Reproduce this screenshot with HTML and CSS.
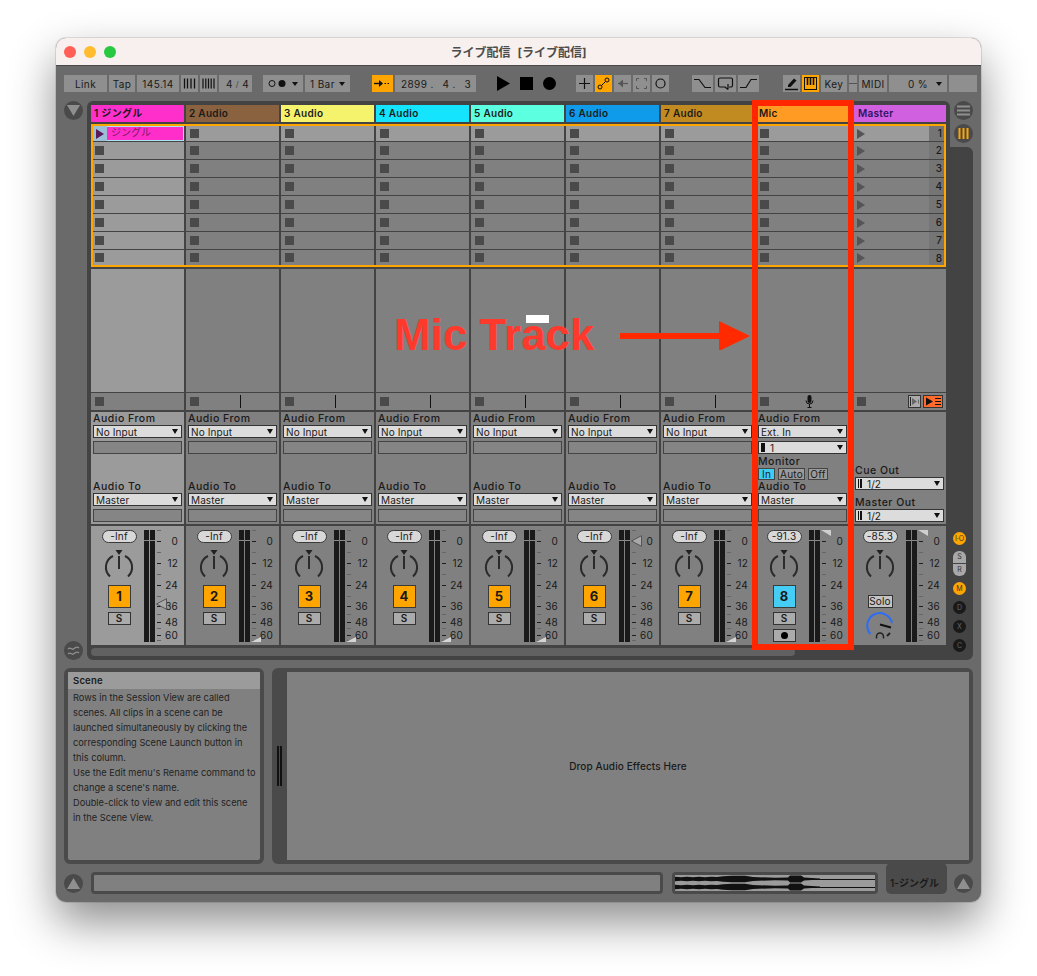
FILE: index.html
```html
<!DOCTYPE html>
<html lang="ja">
<head>
    <meta charset="UTF-8">
    <title>ライブ配信 [ライブ配信]</title>
    <link rel="stylesheet" href="styles.css">
</head>
<body>
    <svg class="defs">
        <symbol id="knob" viewBox="0 0 30 36">
            <path d="M11.5 4h7L15 9z" fill="#222"/>
            <path d="M15 10v13" stroke="#2b2b2b" stroke-width="2"/>
            <path d="M9 10A12.5 12.5 0 0 0 6 30.500M21 10A12.5 12.5 0 0 1 24 30.500" fill="none" stroke="#2b2b2b" stroke-width="2"/>
        </symbol>
        <symbol id="ticks" viewBox="0 0 7 112">
            <path d="M2 11.5h4M2 33.5h4M2 55.5h4M2 76.5h4M2 92.5h4M2 105.5h4" stroke="#1e1e1e"/>
            <path d="M2 .5h4M2 22.5h4M2 44.5h4M2 66.5h4M2 84.5h4M2 98.5h4M2 110.5h4" stroke="#666"/>
        </symbol>
        <symbol id="fader-left" viewBox="0 0 11 12">
            <path d="M.5 6L10.5.7v10.6z" fill="#a9a9a9" stroke="#555"/>
        </symbol>
        <symbol id="fader-low" viewBox="0 0 10 5">
            <path d="M0 5L10 0v5z" fill="#d4d4d4"/>
        </symbol>
        <symbol id="fader-top" viewBox="0 0 10 6">
            <path d="M0 0h10v6z" fill="#cfcfcf"/>
        </symbol>
        <symbol id="bars4" viewBox="0 0 17 17">
            <path d="M3.5 3.500v10M6.500 3.500v10M10 3.500v10M13.500 3.500v10" stroke="#111" stroke-width="1.300"/>
        </symbol>
        <symbol id="bars5" viewBox="0 0 17 17">
            <path d="M3 3.500v10M5.800 3.500v10M8.500 3.500v10M11.200 3.500v10M14 3.500v10" stroke="#111" stroke-width="1.200"/>
        </symbol>
        <path id="wave" d="M0 1.800L6 2.200 12 1.800 18 2.200 24 1.800 30 2.200 36 1.800 42 2 48 1.300 57 .8 70 .8 78 2 100 2.800 113 2.500 115 .5 126 .5 129 2.400 145 3.600V4.400L129 5.600 126 7.500H115L113 5.500 100 5.200 78 6 70 7.200H57L48 6.700 42 6 36 6.200 30 5.800 24 6.200 18 5.800 12 6.200 6 5.800 0 6.200z" fill="#111"/>
    </svg>

    <div class="window">
        <header class="titlebar">
            <div class="lights"><i class="red"></i><i class="yellow"></i><i class="green"></i></div>
            <h1>ライブ配信 [ライブ配信]</h1>
        </header>

        <!-- transport -->
        <div class="toolbar">
            <div class="group">
                <div class="btn w43">Link</div>
                <div class="btn w26">Tap</div>
                <div class="btn w42">145.14</div>
                <div class="btn w17"><svg width="17" height="17"><use href="#bars4"/></svg></div>
                <div class="btn w17"><svg width="17" height="17"><use href="#bars5"/></svg></div>
                <div class="btn w33 sig">4 <small>/</small> 4</div>
            </div>
            <div class="group gap11">
                <div class="btn w40 caret">
                    <svg width="19" height="9"><circle cx="4" cy="4.5" r="3" fill="none" stroke="#111"/><circle cx="14" cy="4.5" r="3.5" fill="#111"/></svg>
                </div>
                <div class="btn w45 caret">1 Bar</div>
            </div>
            <div class="group gap22">
                <div class="btn w21 on">
                    <svg width="17" height="9"><path d="M0 4.5h8" stroke="#111" stroke-width="1.4"/><path d="M5 1l4 3.5L5 8z" fill="#111"/><path d="M10.5 4.5h1.5M13.5 4.5h1.5" stroke="#111"/></svg>
                </div>
                <div class="btn w81 pos"><span>2899 .</span><span>4 .</span><span>3</span></div>
            </div>
            <div class="group gap21 transport">
                <svg width="13" height="17"><path d="M0 1l13 7.5L0 16z" fill="#000"/></svg>
                <svg width="13" height="17"><rect y="2" width="13" height="13" fill="#000"/></svg>
                <svg width="13" height="17"><circle cx="6.5" cy="8.5" r="6.5" fill="#000"/></svg>
            </div>
            <div class="group gap20">
                <div class="btn w17"><svg width="13" height="13"><path d="M6.5 1v11M1 6.5h11" stroke="#111" stroke-width="1.2"/></svg></div>
                <div class="btn w17 on"><svg width="13" height="13"><circle cx="3" cy="10" r="2" fill="none" stroke="#111"/><circle cx="10" cy="3" r="2" fill="none" stroke="#111"/><path d="M4.5 8.5l4-4" stroke="#111"/></svg></div>
                <div class="btn w17"><svg width="13" height="13"><path d="M2 6.5h10" stroke="#555" stroke-width="1.2"/><path d="M7 2.5L2.5 6.500 7 10.500z" fill="#555"/></svg></div>
                <div class="btn w17"><svg width="13" height="13"><path d="M1.500 4V1.500H4M9 1.500h2.500V4M1.500 9v2.500H4M9 11.500h2.500V9" fill="none" stroke="#555"/></svg></div>
                <div class="btn w17"><svg width="13" height="13"><circle cx="6.500" cy="6.500" r="4.500" fill="none" stroke="#111" stroke-width="1.200"/></svg></div>
            </div>
            <div class="group gap23">
                <div class="btn w21"><svg width="17" height="13"><path d="M0 2.500h5l6 8h6" fill="none" stroke="#111" stroke-width="1.200"/></svg></div>
                <div class="btn w21"><svg width="17" height="15"><path d="M8 11H3a1.500 1.500 0 0 1-1.500-1.500v-6A1.500 1.500 0 0 1 3 2h11a1.500 1.500 0 0 1 1.500 1.500v6A1.500 1.500 0 0 1 14 11h-2" fill="none" stroke="#111" stroke-width="1.200"/><path d="M11 8v5.500M11 13.500L8 11" stroke="#111" stroke-width="1.200"/></svg></div>
                <div class="btn w21"><svg width="17" height="13"><path d="M0 10.500h6l5-8h6" fill="none" stroke="#111" stroke-width="1.200"/></svg></div>
            </div>
            <div class="group gap24">
                <div class="btn w17"><svg width="15" height="15"><path d="M4 9l6-6.500 2.500 2L6.500 11H4z" fill="#111"/><path d="M1 13.500h13" stroke="#111" stroke-width="1.500"/></svg></div>
                <div class="btn w17 on"><svg width="13" height="13"><rect x=".5" y=".5" width="12" height="12" fill="none" stroke="#111"/><path d="M3.500 1v7M6.500 1v7M9.500 1v7" stroke="#111" stroke-width="1.600"/></svg></div>
                <div class="btn w26">Key</div>
                <div class="btn w8 split"></div>
                <div class="btn w28">MIDI</div>
                <div class="btn w58 caret centered">0 %</div>
                <div class="btn w28"></div>
            </div>
        </div>

        <div class="main">
            <div class="rail">
                <div class="round"><svg width="13" height="11"><path d="M0 0h13L6.500 11z" fill="#8f8f8f"/></svg></div>
                <div class="round"><svg width="13" height="11"><path d="M1 4c2.500-3 4 1.500 5.500 0S10 1 12 3M1 9c2.500-3 4 1.500 5.500 0S10 6 12 8" fill="none" stroke="#8f8f8f" stroke-width="1.300"/></svg></div>
            </div>

            <div class="session">
                <div class="tracks heads">
                    <div class="head c1">1 ジングル</div>
                    <div class="head c2">2 Audio</div>
                    <div class="head c3">3 Audio</div>
                    <div class="head c4">4 Audio</div>
                    <div class="head c5">5 Audio</div>
                    <div class="head c6">6 Audio</div>
                    <div class="head c7">7 Audio</div>
                    <div class="head c8">Mic</div>
                    <div class="head c9">Master</div>
                </div>

                <!-- clip slots, row by row -->
                <div class="clips">
                    <div class="slot clip"><b class="launch"></b><span>ジングル</span></div>
                    <div class="slot"><i></i></div><div class="slot"><i></i></div><div class="slot"><i></i></div><div class="slot"><i></i></div><div class="slot"><i></i></div><div class="slot"><i></i></div><div class="slot"><i></i></div>
                    <div class="slot"><b class="launch"></b><span class="num">1</span></div>

                    <div class="slot"><i></i></div><div class="slot"><i></i></div><div class="slot"><i></i></div><div class="slot"><i></i></div><div class="slot"><i></i></div><div class="slot"><i></i></div><div class="slot"><i></i></div><div class="slot"><i></i></div>
                    <div class="slot"><b class="launch"></b><span class="num">2</span></div>

                    <div class="slot"><i></i></div><div class="slot"><i></i></div><div class="slot"><i></i></div><div class="slot"><i></i></div><div class="slot"><i></i></div><div class="slot"><i></i></div><div class="slot"><i></i></div><div class="slot"><i></i></div>
                    <div class="slot"><b class="launch"></b><span class="num">3</span></div>

                    <div class="slot"><i></i></div><div class="slot"><i></i></div><div class="slot"><i></i></div><div class="slot"><i></i></div><div class="slot"><i></i></div><div class="slot"><i></i></div><div class="slot"><i></i></div><div class="slot"><i></i></div>
                    <div class="slot"><b class="launch"></b><span class="num">4</span></div>

                    <div class="slot"><i></i></div><div class="slot"><i></i></div><div class="slot"><i></i></div><div class="slot"><i></i></div><div class="slot"><i></i></div><div class="slot"><i></i></div><div class="slot"><i></i></div><div class="slot"><i></i></div>
                    <div class="slot"><b class="launch"></b><span class="num">5</span></div>

                    <div class="slot"><i></i></div><div class="slot"><i></i></div><div class="slot"><i></i></div><div class="slot"><i></i></div><div class="slot"><i></i></div><div class="slot"><i></i></div><div class="slot"><i></i></div><div class="slot"><i></i></div>
                    <div class="slot"><b class="launch"></b><span class="num">6</span></div>

                    <div class="slot"><i></i></div><div class="slot"><i></i></div><div class="slot"><i></i></div><div class="slot"><i></i></div><div class="slot"><i></i></div><div class="slot"><i></i></div><div class="slot"><i></i></div><div class="slot"><i></i></div>
                    <div class="slot"><b class="launch"></b><span class="num">7</span></div>

                    <div class="slot"><i></i></div><div class="slot"><i></i></div><div class="slot"><i></i></div><div class="slot"><i></i></div><div class="slot"><i></i></div><div class="slot"><i></i></div><div class="slot"><i></i></div><div class="slot"><i></i></div>
                    <div class="slot"><b class="launch"></b><span class="num">8</span></div>
                </div>

                <div class="tracks drops">
                    <div class="sel"></div><div></div><div></div><div></div><div></div><div></div><div></div><div></div><div></div>
                </div>

                <div class="tracks stats">
                    <div class="stat"><i class="sq"></i></div>
                    <div class="stat"><i class="sq"></i><i class="tick"></i></div>
                    <div class="stat"><i class="sq"></i><i class="tick"></i></div>
                    <div class="stat"><i class="sq"></i><i class="tick"></i></div>
                    <div class="stat"><i class="sq"></i><i class="tick"></i></div>
                    <div class="stat"><i class="sq"></i><i class="tick"></i></div>
                    <div class="stat"><i class="sq"></i><i class="tick"></i></div>
                    <div class="stat"><i class="sq"></i>
                        <svg class="mic" width="9" height="13"><rect x="2.500" y="0" width="4" height="8" rx="2" fill="#111"/><path d="M1 5.500a3.500 3.500 0 0 0 7 0M4.500 9v3M2.500 12.500h4" fill="none" stroke="#111"/></svg>
                    </div>
                    <div class="stat master"><i class="sq"></i>
                        <span class="xbtn"><svg width="11" height="11"><path d="M1.500 1v9" stroke="#222"/><path d="M3 2l5 3.500L3 9z" fill="#666"/><path d="M9.500 3.500v4" stroke="#666"/></svg></span>
                        <span class="xbtn hot"><svg width="17" height="9"><path d="M1 .5l7 4-7 4z" fill="#111"/><path d="M10 1.500h6M10 4.500h6M10 7.500h6" stroke="#111" stroke-width="1.200"/></svg></span>
                    </div>
                </div>

                <div class="tracks routes">
                    <div class="route sel">
                        <div class="rt"><label>Audio From</label><div class="dd">No Input</div><div class="rbox"></div></div>
                        <div class="rt"><label>Audio To</label><div class="dd">Master</div><div class="rbox"></div></div>
                    </div>
                    <div class="route">
                        <div class="rt"><label>Audio From</label><div class="dd">No Input</div><div class="rbox"></div></div>
                        <div class="rt"><label>Audio To</label><div class="dd">Master</div><div class="rbox"></div></div>
                    </div>
                    <div class="route">
                        <div class="rt"><label>Audio From</label><div class="dd">No Input</div><div class="rbox"></div></div>
                        <div class="rt"><label>Audio To</label><div class="dd">Master</div><div class="rbox"></div></div>
                    </div>
                    <div class="route">
                        <div class="rt"><label>Audio From</label><div class="dd">No Input</div><div class="rbox"></div></div>
                        <div class="rt"><label>Audio To</label><div class="dd">Master</div><div class="rbox"></div></div>
                    </div>
                    <div class="route">
                        <div class="rt"><label>Audio From</label><div class="dd">No Input</div><div class="rbox"></div></div>
                        <div class="rt"><label>Audio To</label><div class="dd">Master</div><div class="rbox"></div></div>
                    </div>
                    <div class="route">
                        <div class="rt"><label>Audio From</label><div class="dd">No Input</div><div class="rbox"></div></div>
                        <div class="rt"><label>Audio To</label><div class="dd">Master</div><div class="rbox"></div></div>
                    </div>
                    <div class="route">
                        <div class="rt"><label>Audio From</label><div class="dd">No Input</div><div class="rbox"></div></div>
                        <div class="rt"><label>Audio To</label><div class="dd">Master</div><div class="rbox"></div></div>
                    </div>
                    <div class="route">
                        <div class="rt"><label>Audio From</label><div class="dd">Ext. In</div><div class="dd second"><i class="bar"></i>1</div></div>
                        <div class="monitor">
                            <label>Monitor</label>
                            <div class="mon-btns"><span class="active">In</span><span class="auto">Auto</span><span class="off">Off</span></div>
                        </div>
                        <div class="rt"><label>Audio To</label><div class="dd">Master</div><div class="rbox"></div></div>
                    </div>
                    <div class="route out">
                        <div class="rt"><label>Cue Out</label><div class="dd"><i class="bar two"></i>1/2</div></div>
                        <div class="rt"><label>Master Out</label><div class="dd"><i class="bar two"></i>1/2</div></div>
                    </div>
                </div>

                <div class="tracks strips">
                    <div class="strip sel">
                        <div class="ctl">
                            <div class="pill">-Inf</div>
                            <svg class="knob"><use href="#knob"/></svg>
                            <div class="activator">1</div>
                            <div class="small">S</div>
                        </div>
                        <div class="meter"><i></i><i></i></div>
                        <div class="scale">
                            <svg class="ticks"><use href="#ticks"/></svg>
                            <ul class="db"><li>0</li><li>12</li><li>24</li><li>36</li><li>48</li><li>60</li></ul>
                            <svg class="fader at-mid"><use href="#fader-left"/></svg>
                        </div>
                    </div>
                    <div class="strip">
                        <div class="ctl">
                            <div class="pill">-Inf</div>
                            <svg class="knob"><use href="#knob"/></svg>
                            <div class="activator">2</div>
                            <div class="small">S</div>
                        </div>
                        <div class="meter"><i></i><i></i></div>
                        <div class="scale">
                            <svg class="ticks"><use href="#ticks"/></svg>
                            <ul class="db"><li>0</li><li>12</li><li>24</li><li>36</li><li>48</li><li>60</li></ul>
                            <svg class="fader at-low"><use href="#fader-low"/></svg>
                        </div>
                    </div>
                    <div class="strip">
                        <div class="ctl">
                            <div class="pill">-Inf</div>
                            <svg class="knob"><use href="#knob"/></svg>
                            <div class="activator">3</div>
                            <div class="small">S</div>
                        </div>
                        <div class="meter"><i></i><i></i></div>
                        <div class="scale">
                            <svg class="ticks"><use href="#ticks"/></svg>
                            <ul class="db"><li>0</li><li>12</li><li>24</li><li>36</li><li>48</li><li>60</li></ul>
                            <svg class="fader at-low"><use href="#fader-low"/></svg>
                        </div>
                    </div>
                    <div class="strip">
                        <div class="ctl">
                            <div class="pill">-Inf</div>
                            <svg class="knob"><use href="#knob"/></svg>
                            <div class="activator">4</div>
                            <div class="small">S</div>
                        </div>
                        <div class="meter"><i></i><i></i></div>
                        <div class="scale">
                            <svg class="ticks"><use href="#ticks"/></svg>
                            <ul class="db"><li>0</li><li>12</li><li>24</li><li>36</li><li>48</li><li>60</li></ul>
                            <svg class="fader at-low"><use href="#fader-low"/></svg>
                        </div>
                    </div>
                    <div class="strip">
                        <div class="ctl">
                            <div class="pill">-Inf</div>
                            <svg class="knob"><use href="#knob"/></svg>
                            <div class="activator">5</div>
                            <div class="small">S</div>
                        </div>
                        <div class="meter"><i></i><i></i></div>
                        <div class="scale">
                            <svg class="ticks"><use href="#ticks"/></svg>
                            <ul class="db"><li>0</li><li>12</li><li>24</li><li>36</li><li>48</li><li>60</li></ul>
                            <svg class="fader at-low"><use href="#fader-low"/></svg>
                        </div>
                    </div>
                    <div class="strip">
                        <div class="ctl">
                            <div class="pill">-Inf</div>
                            <svg class="knob"><use href="#knob"/></svg>
                            <div class="activator">6</div>
                            <div class="small">S</div>
                        </div>
                        <div class="meter"><i></i><i></i></div>
                        <div class="scale">
                            <svg class="ticks"><use href="#ticks"/></svg>
                            <ul class="db"><li>0</li><li>12</li><li>24</li><li>36</li><li>48</li><li>60</li></ul>
                            <svg class="fader at-zero"><use href="#fader-left"/></svg>
                        </div>
                    </div>
                    <div class="strip">
                        <div class="ctl">
                            <div class="pill">-Inf</div>
                            <svg class="knob"><use href="#knob"/></svg>
                            <div class="activator">7</div>
                            <div class="small">S</div>
                        </div>
                        <div class="meter"><i></i><i></i></div>
                        <div class="scale">
                            <svg class="ticks"><use href="#ticks"/></svg>
                            <ul class="db"><li>0</li><li>12</li><li>24</li><li>36</li><li>48</li><li>60</li></ul>
                            <svg class="fader at-low"><use href="#fader-low"/></svg>
                        </div>
                    </div>
                    <div class="strip">
                        <div class="ctl">
                            <div class="pill">-91.3</div>
                            <svg class="knob"><use href="#knob"/></svg>
                            <div class="activator armed">8</div>
                            <div class="small">S</div>
                            <div class="small rec"><i></i></div>
                        </div>
                        <div class="meter"><i></i><i></i></div>
                        <div class="scale">
                            <svg class="ticks"><use href="#ticks"/></svg>
                            <ul class="db"><li>0</li><li>12</li><li>24</li><li>36</li><li>48</li><li>60</li></ul>
                            <svg class="fader at-top"><use href="#fader-top"/></svg>
                        </div>
                    </div>
                    <div class="strip master">
                        <div class="ctl">
                            <div class="pill">-85.3</div>
                            <svg class="knob"><use href="#knob"/></svg>
                            <div class="solo">Solo</div>
                            <svg class="cue" width="30" height="30">
                                <path d="M5.500 23A12.500 12.500 0 1 1 27 12" fill="none" stroke="#2f6cf5" stroke-width="2"/>
                                <path d="M15 13.500l11 3" stroke="#111" stroke-width="2"/>
                                <path d="M25 22l-3 3" stroke="#222" stroke-width="2"/>
                                <path d="M11.500 27.500v-2a3.500 3.500 0 0 1 7 0v2" fill="none" stroke="#222" stroke-width="1.500"/>
                            </svg>
                        </div>
                        <div class="meter"><i></i><i></i></div>
                        <div class="scale">
                            <svg class="ticks"><use href="#ticks"/></svg>
                            <ul class="db"><li>0</li><li>12</li><li>24</li><li>36</li><li>48</li><li>60</li></ul>
                            <svg class="fader at-top"><use href="#fader-top"/></svg>
                        </div>
                    </div>
                </div>

                <div class="hscroll"><div class="thumb"></div></div>
            </div>

            <div class="side">
                <div class="side-top">
                    <div class="round"><svg width="13" height="11"><path d="M0 1.500h13M0 5.500h13M0 9.500h13" stroke="#8f8f8f" stroke-width="2"/></svg></div>
                    <div class="round"><svg width="11" height="11"><path d="M1.500 0v11M5.500 0v11M9.500 0v11" stroke="#ffa500" stroke-width="2"/></svg></div>
                </div>
                <div class="side-panel">
                    <span class="dot lit">I·O</span>
                    <div class="sr"><span>S</span><span>R</span></div>
                    <span class="dot lit">M</span>
                    <span class="dot">D</span>
                    <span class="dot">X</span>
                    <span class="dot">C</span>
                </div>
            </div>
        </div>

        <div class="lower">
            <section class="info">
                <h2>Scene</h2>
                <p>Rows in the Session View are called<br>scenes. All clips in a scene can be<br>launched simultaneously by clicking the<br>corresponding Scene Launch button in<br>this column.<br>Use the Edit menu's Rename command to<br>change a scene's name.<br>Double-click to view and edit this scene<br>in the Scene View.</p>
            </section>
            <section class="device">
                <div class="handle"><i></i></div>
                <div class="drop-fx">Drop Audio Effects Here</div>
            </section>
        </div>

        <div class="statusbar">
            <div class="round"><svg width="13" height="11"><path d="M0 11h13L6.500 0z" fill="#8f8f8f"/></svg></div>
            <div class="status-input"></div>
            <div class="overview">
                <svg width="200" height="16">
                    <path d="M0 4.500h200M0 12.500h200" stroke="#111"/>
                    <use href="#wave"/>
                    <use href="#wave" y="8"/>
                </svg>
            </div>
            <div class="scene-tab">1-ジングル</div>
            <div class="round"><svg width="13" height="11"><path d="M0 11h13L6.500 0z" fill="#8f8f8f"/></svg></div>
        </div>

        <!-- annotation drawn on top of the screenshot -->
        <div class="mark-box"></div>
        <div class="mark-white"></div>
        <div class="mark-text">Mic Track</div>
        <svg class="mark-arrow" width="130" height="30"><path d="M0 16h100" stroke="#ff2a00" stroke-width="6"/><path d="M99 1l31 15-31 15z" fill="#ff2a00"/></svg>
    </div>
</body>
</html>
```

FILE: styles.css
```css
* {
    box-sizing: border-box;
}

html {
    background: #fff;
}

body {
    min-height: 100vh;
    margin: 0;
    padding: 38px 56px 0;
    font-family: Inter, "Noto Sans CJK JP", sans-serif;
    font-size: 10px;
    color: #1a1a1a;
}

.defs {
    display: none;
}

.window {
    position: relative;
    width: 925px;
    height: 864px;
    background: #6a6a6a;
    border-radius: 10px;
    box-shadow: 0 0 0 1px rgba(0, 0, 0, .1), 0 20px 45px rgba(0, 0, 0, .45);
}

/* title bar */
.titlebar {
    position: relative;
    height: 28px;
    background: #f8f0ee;
    border-radius: 10px 10px 0 0;
    border-bottom: 1px solid #4a4a4a;
    display: flex;
    align-items: center;
    justify-content: center;
}

.titlebar h1 {
    margin: 0;
    font-size: 12px;
    font-weight: 700;
    color: #4c4c4c;
    word-spacing: 4px;
}

.lights {
    position: absolute;
    left: 8px;
    display: flex;
    gap: 8px;
}

.lights i {
    width: 12px;
    height: 12px;
    border-radius: 50%;
}

.red { background: #ff5f57; }
.yellow { background: #febc2e; }
.green { background: #28c840; }

/* toolbar */
.toolbar {
    display: flex;
    height: 17px;
    margin: 9px 0 0 8px;
}

.group {
    display: flex;
    gap: 2px;
}

.gap11 { margin-left: 11px; }
.gap20 { margin-left: 20px; }
.gap21 { margin-left: 21px; }
.gap22 { margin-left: 22px; }
.gap23 { margin-left: 23px; }
.gap24 { margin-left: 24px; }

.transport {
    gap: 10px;
}

.btn {
    display: flex;
    align-items: center;
    justify-content: center;
    gap: 5px;
    background: #8f8f8f;
    font-size: 10px;
    letter-spacing: .4px;
    white-space: nowrap;
}

.btn small {
    font-size: 8px;
    color: #444;
}

.btn.sig {
    gap: 3px;
    padding-left: 4px;
}

.btn.on { background: #ffa500; }
.w8 { width: 8px; }
.w17 { width: 17px; }
.w21 { width: 21px; }
.w26 { width: 26px; }
.w28 { width: 28px; }
.w33 { width: 33px; }
.w40 { width: 40px; }
.w42 { width: 42px; }
.w43 { width: 43px; }
.w45 { width: 45px; }
.w58 { width: 58px; }
.w81 { width: 81px; }

.btn.caret {
    justify-content: flex-start;
    padding-left: 5px;
    position: relative;
}

.btn.centered {
    justify-content: center;
    padding-left: 0;
}

.btn.caret::after {
    content: "";
    position: absolute;
    right: 5px;
    top: 7px;
    border: 3px solid transparent;
    border-top: 4px solid #111;
    border-bottom: 0;
}

.btn.pos {
    justify-content: space-between;
    padding: 0 5px 0 6px;
}

.btn.split {
    background: linear-gradient(#8f8f8f 8px, #555 8px, #555 9px, #8f8f8f 9px);
}

/* main row */
.main {
    display: flex;
    height: 559px;
    margin: 9px 0 0 8px;
}

.rail {
    width: 19px;
    margin-right: 4px;
    display: flex;
    flex-direction: column;
    justify-content: space-between;
}

.round {
    width: 19px;
    height: 19px;
    border-radius: 50%;
    background: #4a4a4a;
    display: flex;
    align-items: center;
    justify-content: center;
}

.session {
    width: 863px;
    padding: 4px 4px 0;
    background: #434343;
    border-radius: 6px 6px 0 6px;
    display: flex;
    flex-direction: column;
}

.tracks {
    display: grid;
    grid-template-columns: repeat(8, 93px) 95px;
    column-gap: 2px;
}

.heads {
    height: 17px;
    margin-bottom: 2px;
}

.head {
    padding-left: 3px;
    font-weight: 600;
    font-size: 10px;
    letter-spacing: .3px;
    line-height: 17px;
}

.c1 { background: #ff2fcc; }
.c2 { background: #8a6240; }
.c3 { background: #f5f26b; }
.c4 { background: #15e4ff; }
.c5 { background: #5cffe0; }
.c6 { background: #0f9aea; }
.c7 { background: #c28b22; }
.c8 { background: #ff9a22; }
.c9 { background: #d160e0; color: #2f1460; padding-left: 7px; }

/* clip slots */
.clips {
    display: grid;
    grid-template-columns: 91px repeat(8, 93px);
    grid-template-rows: 15px repeat(6, 17px) 15px;
    gap: 1px 2px;
    height: 143px;
    border: 2px solid #ffa500;
    margin-bottom: 2px;
}

.slot {
    display: flex;
    align-items: center;
    padding-left: 4px;
    background: #808080;
}

.slot:nth-child(9n+1) { padding-left: 2px; background: #9b9b9b; }
.slot:nth-child(-n+9) { background: #9b9b9b; }
.slot:nth-child(9n) { padding-left: 6px; }

.slot i {
    width: 9px;
    height: 9px;
    background: #4a4a4a;
}

.launch {
    width: 0;
    height: 0;
    border-left: 8px solid #555;
    border-top: 5px solid transparent;
    border-bottom: 5px solid transparent;
}

.num {
    width: 15px;
    height: 100%;
    margin-left: auto;
    padding-right: 2px;
    background: #757575;
    text-align: right;
    line-height: 15px;
    font-weight: 500;
}

.slot:nth-child(n+10) .num {
    line-height: 17px;
}

.slot.clip {
    padding-left: 0;
    background: #ff2ecb;
    color: #7b1a66;
    box-shadow: inset 0 0 0 1px #a9e6f0;
}

.slot.clip .launch {
    width: 14px;
    height: 15px;
    border: 0;
    background: #9bc0d8;
    position: relative;
}

.slot.clip .launch::after {
    content: "";
    position: absolute;
    left: 3px;
    top: 3px;
    border-left: 8px solid #5a1a5a;
    border-top: 5px solid transparent;
    border-bottom: 5px solid transparent;
}

.slot.clip span {
    margin: 0 0 3px 4px;
    font-size: 10px;
    line-height: 12px;
}

/* empty area under the clips */
.drops {
    height: 123px;
    margin-bottom: 1px;
}

.drops div {
    background: #808080;
}

.drops .sel,
.route.sel,
.strip.sel {
    background: #9b9b9b;
}

/* status row */
.stats {
    height: 17px;
    margin-bottom: 2px;
}

.stat {
    display: flex;
    align-items: center;
    padding-left: 4px;
    background: #808080;
}

.stat .sq {
    width: 9px;
    height: 9px;
    background: #4a4a4a;
}

.stat .tick {
    width: 1px;
    height: 13px;
    margin-left: 41px;
    background: #111;
}

.stat .mic {
    margin-left: 36px;
}

.stat.master {
    padding: 0 3px 0 6px;
}

.xbtn {
    width: 13px;
    height: 13px;
    margin-left: 42px;
    display: flex;
    align-items: center;
    justify-content: center;
    background: #ababab;
    border: 1px solid #333;
}

.xbtn.hot {
    width: 20px;
    margin-left: 2px;
    background: #ff6a2c;
}

/* routing */
.routes {
    height: 112px;
    margin-bottom: 2px;
}

.route {
    display: flex;
    flex-direction: column;
    justify-content: space-between;
    padding: 0 2px 2px;
    background: #808080;
}

.route.out {
    justify-content: flex-end;
    gap: 6px;
    padding-left: 4px;
}

.route label {
    display: block;
    height: 13px;
    font-size: 10.500px;
    font-weight: 500;
    letter-spacing: .5px;
    line-height: 13px;
}

.dd {
    position: relative;
    display: flex;
    align-items: center;
    height: 13px;
    padding-left: 2px;
    background: #dcdcdc;
    border: 1px solid #333;
    letter-spacing: .1px;
}

.dd::after {
    content: "";
    position: absolute;
    right: 3px;
    top: 3px;
    border: 3.500px solid transparent;
    border-top: 5px solid #111;
    border-bottom: 0;
}

.dd.second {
    margin-top: 3px;
}

.dd .bar {
    width: 4px;
    height: 9px;
    margin-right: 5px;
    background: #111;
}

.dd .bar.two {
    width: 4px;
    background: linear-gradient(90deg, #111 1.500px, transparent 1.500px, transparent 2.500px, #111 2.500px);
}

.rbox {
    height: 13px;
    margin-top: 3px;
    border: 1px solid #444;
    background: #858585;
}

.monitor {
    margin-top: 1px;
}

.mon-btns {
    display: flex;
    gap: 3px;
    height: 12px;
}

.mon-btns span {
    display: flex;
    align-items: center;
    justify-content: center;
    background: #9a9a9a;
    border: 1px solid #444;
    letter-spacing: .2px;
}

.mon-btns .active { width: 17px; background: #3ecdf5; }
.mon-btns .auto { width: 27px; }
.mon-btns .off { width: 20px; }

/* mixer */
.strips {
    height: 119px;
}

.strip {
    display: flex;
    padding: 4px 0 0 3px;
    background: #808080;
}

.ctl {
    width: 50px;
    display: flex;
    flex-direction: column;
    align-items: center;
}

.strip.master .ctl {
    width: 52px;
}

.pill {
    width: 35px;
    height: 13px;
    background: #d8d8d8;
    border: 1px solid #3a3a3a;
    border-radius: 7px;
    text-align: center;
    line-height: 11px;
    letter-spacing: .2px;
}

.knob {
    width: 30px;
    height: 36px;
    margin: 3px 0;
}

.activator {
    width: 23px;
    height: 23px;
    background: #ffa500;
    border: 1px solid #3a3a3a;
    text-align: center;
    font-size: 13px;
    font-weight: 700;
    line-height: 21px;
}

.activator.armed {
    background: #45cdf5;
}

.small {
    width: 23px;
    height: 13px;
    margin-top: 4px;
    background: #ababab;
    border: 1px solid #333;
    text-align: center;
    font-size: 10px;
    font-weight: 600;
    line-height: 11px;
}

.small.rec {
    display: flex;
    align-items: center;
    justify-content: center;
}

.small.rec i {
    width: 7px;
    height: 7px;
    border-radius: 50%;
    background: #000;
}

.solo {
    width: 25px;
    height: 13px;
    margin-top: 10px;
    background: #c4c4c4;
    border: 1px solid #333;
    text-align: center;
    line-height: 11px;
    letter-spacing: .2px;
}

.cue {
    margin-top: 3px;
}

.meter {
    display: flex;
    gap: 1px;
    height: 112px;
}

.meter i {
    width: 5px;
    background: linear-gradient(#1a1a1a 10px, #8a8a8a 10px, #8a8a8a 11px, #1a1a1a 11px);
}

.scale {
    position: relative;
    display: flex;
    height: 112px;
}

.ticks {
    width: 7px;
    height: 112px;
}

.db {
    width: 16px;
    margin: 0;
    padding: 5px 0 0;
    list-style: none;
    text-align: right;
    display: grid;
    grid-template-rows: 22px 22px 21px 16px 13px 12px;
    line-height: 12px;
    letter-spacing: .2px;
}

.fader {
    position: absolute;
    left: 1px;
}

.fader.at-mid { top: 68px; width: 11px; height: 12px; }
.fader.at-zero { top: 5px; width: 11px; height: 12px; }
.fader.at-low { top: 107px; width: 10px; height: 5px; }
.fader.at-top { top: 0; width: 10px; height: 6px; }

.hscroll {
    height: 8px;
    margin-top: 3px;
    border-radius: 4px;
}

.thumb {
    width: 704px;
    height: 8px;
    background: #616161;
    border-radius: 4px;
}

/* right side */
.side {
    width: 23px;
    display: flex;
    flex-direction: column;
}

.side-top {
    height: 46px;
    padding-left: 4px;
    display: flex;
    flex-direction: column;
    gap: 4px;
}

.side-panel {
    flex: 1;
    padding: 0 0 8px 3px;
    display: flex;
    flex-direction: column;
    justify-content: flex-end;
    gap: 6px;
    background: #434343;
    border-radius: 0 6px 6px 0;
}

.dot {
    width: 13px;
    height: 13px;
    border-radius: 50%;
    background: #191919;
    color: #666;
    text-align: center;
    font-size: 7px;
    line-height: 13px;
}

.dot.lit {
    background: #ffa500;
    color: #333;
}

.sr {
    width: 13px;
    height: 25px;
    border-radius: 6px;
    overflow: hidden;
    display: flex;
    flex-direction: column;
    gap: 1px;
    text-align: center;
    font-size: 7px;
    color: #333;
}

.sr span {
    flex: 1;
    line-height: 12px;
    background: #a8a8a8;
}

/* info + device */
.lower {
    display: flex;
    gap: 8px;
    height: 196px;
    margin: 8px 0 0 8px;
}

.info {
    width: 200px;
    border: 4px solid #4a4a4a;
    border-radius: 6px;
    background: #808080;
}

.info h2 {
    margin: 0;
    height: 17px;
    padding-left: 5px;
    background: #9b9b9b;
    font-size: 9.500px;
    font-weight: 600;
    line-height: 17px;
    letter-spacing: .2px;
}

.info p {
    margin: 0;
    padding: 1px 0 0 5px;
    font-size: 9.250px;
    line-height: 15px;
    color: #222;
    white-space: nowrap;
}

.device {
    width: 701px;
    display: flex;
    padding: 4px 4px 4px 0;
    background: #4a4a4a;
    border-radius: 6px;
}

.handle {
    width: 15px;
    padding: 74px 0 0 5px;
}

.handle i {
    display: block;
    width: 5px;
    height: 40px;
    background: linear-gradient(90deg, #111 2px, transparent 2px, transparent 3px, #111 3px);
}

.drop-fx {
    flex: 1;
    display: flex;
    align-items: center;
    justify-content: center;
    background: #808080;
    font-weight: 500;
    letter-spacing: .1px;
}

/* bottom bar */
.statusbar {
    display: flex;
    align-items: center;
    height: 22px;
    margin: 8px 0 0 8px;
}

.status-input {
    width: 572px;
    height: 22px;
    margin-left: 8px;
    background: #808080;
    border: 3px solid #4a4a4a;
    border-radius: 4px;
}

.overview {
    width: 206px;
    height: 22px;
    margin-left: 9px;
    padding: 3px;
    background: #4a4a4a;
    border-radius: 4px;
}

.overview svg {
    display: block;
    background: #9b9b9b;
}

.scene-tab {
    width: 61px;
    height: 31px;
    margin: -9px 7px 0 8px;
    padding: 9px 0 0 4px;
    background: #4a4a4a;
    border-radius: 5px;
    font-weight: 600;
    font-size: 10px;
    line-height: 22px;
    white-space: nowrap;
}

/* red annotation */
.mark-box {
    position: absolute;
    left: 696px;
    top: 62px;
    width: 102px;
    height: 550px;
    border: 6px solid #ff2600;
}

.mark-white {
    position: absolute;
    left: 470px;
    top: 277px;
    width: 23px;
    height: 8px;
    background: #fff;
}

.mark-text {
    position: absolute;
    left: 338px;
    top: 272px;
    font-family: "Liberation Sans", sans-serif;
    font-size: 44px;
    font-weight: 700;
    line-height: 50px;
    color: #ff3a2c;
    white-space: nowrap;
}

.mark-arrow {
    position: absolute;
    left: 564px;
    top: 282px;
}
```
